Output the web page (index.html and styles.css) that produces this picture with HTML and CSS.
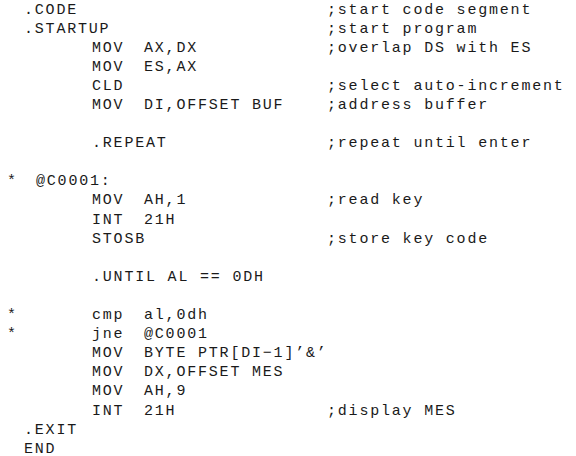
FILE: index.html
```html
<!DOCTYPE html>
<html>
<head>
<meta charset="utf-8">
<link rel="stylesheet" href="styles.css">
</head>
<body>
<div class="listing">
  <div class="row"><span class="label">.CODE</span><span class="comment">;start code segment</span></div>
  <div class="row"><span class="label">.STARTUP</span><span class="comment">;start program</span></div>
  <div class="row"><span class="mnem">MOV</span><span class="args">AX,DX</span><span class="comment">;overlap DS with ES</span></div>
  <div class="row"><span class="mnem">MOV</span><span class="args">ES,AX</span></div>
  <div class="row"><span class="mnem">CLD</span><span class="comment">;select auto-increment</span></div>
  <div class="row"><span class="mnem">MOV</span><span class="args">DI,OFFSET BUF</span><span class="comment">;address buffer</span></div>
  <div class="row"></div>
  <div class="row"><span class="dir">.REPEAT</span><span class="comment">;repeat until enter</span></div>
  <div class="row"></div>
  <div class="row"><span class="mark">*</span><span class="label lbl-gen">@C0001:</span></div>
  <div class="row"><span class="mnem">MOV</span><span class="args">AH,1</span><span class="comment">;read key</span></div>
  <div class="row"><span class="mnem">INT</span><span class="args">21H</span></div>
  <div class="row"><span class="mnem">STOSB</span><span class="comment">;store key code</span></div>
  <div class="row"></div>
  <div class="row"><span class="dir">.UNTIL AL == 0DH</span></div>
  <div class="row"></div>
  <div class="row"><span class="mark">*</span><span class="mnem">cmp</span><span class="args">al,0dh</span></div>
  <div class="row"><span class="mark">*</span><span class="mnem">jne</span><span class="args">@C0001</span></div>
  <div class="row"><span class="mnem">MOV</span><span class="args">BYTE PTR[DI&#8722;1]&#8217;&amp;&#8217;</span></div>
  <div class="row"><span class="mnem">MOV</span><span class="args">DX,OFFSET MES</span></div>
  <div class="row"><span class="mnem">MOV</span><span class="args">AH,9</span></div>
  <div class="row"><span class="mnem">INT</span><span class="args">21H</span><span class="comment">;display MES</span></div>
  <div class="row"><span class="label">.EXIT</span></div>
  <div class="row"><span class="label">END</span></div>
</div>
</body>
</html>
```

FILE: styles.css
```css
html, body {
  margin: 0;
  padding: 0;
  background: #ffffff;
}

.listing {
  padding-top: 1px;
  font-family: "Liberation Mono", "Courier New", monospace;
  font-size: 15px;
  letter-spacing: 1.8px;
  color: #1a1a1a;
}

.row {
  display: grid;
  grid-template-columns: 24px 68px 52px 183px 1fr;
  align-items: center;
  height: 19.1px;
}

.row span {
  white-space: pre;
  line-height: 12px;
}

.mark {
  grid-column: 1;
  padding-left: 7px;
}

.label {
  grid-column: 2 / 5;
}

.lbl-gen {
  padding-left: 12px;
}

.mnem {
  grid-column: 3;
}

.args {
  grid-column: 4;
}

.dir {
  grid-column: 3 / 5;
}

.comment {
  grid-column: 5;
}
```
